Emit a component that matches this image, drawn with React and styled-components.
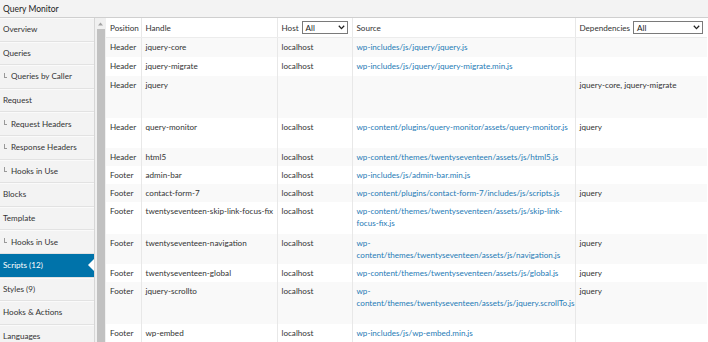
import React from "react"
import styled, { createGlobalStyle } from "styled-components"

const Global = createGlobalStyle`
    html, body {
        margin: 0;
        padding: 0;
        background: #fff;
        overflow: hidden;
    }
    body {
        font-family: Lato, "Open Sans", sans-serif;
        font-size: 8.1px;
        color: #333;
    }
`

const Page = styled.div`
    width: 708px;
    height: 342px;
    display: flex;
    flex-direction: column;
    overflow: hidden;
`

const TitleBar = styled.div`
    height: 17px;
    flex: none;
    display: flex;
    align-items: center;
    padding-left: 3px;
    background: #f3f3f3;
    border-bottom: 1px solid #cfcfcf;
    font-size: 8.5px;
    color: #222;
`

const Body = styled.div`
    flex: 1;
    display: flex;
    min-height: 0;
`

const Nav = styled.ul`
    width: 94px;
    flex: none;
    margin: 0;
    padding: 0;
    list-style: none;
    background: #f3f3f3;
    border-right: 1px solid #d6d6d6;
`

const NavItem = styled.li`
    position: relative;
    height: 22.6px;
    display: flex;
    align-items: center;
    padding-left: ${({ sub }) => (sub ? "4px" : "3px")};
    border-bottom: 1px solid #e2e2e2;
    background: ${({ active }) => (active ? "#0073aa" : "transparent")};
    color: ${({ active }) => (active ? "#fff" : "#333")};
    box-shadow: ${({ active }) => (active ? "none" : "inset 0 1px 0 #fafafa")};

    ${({ active }) =>
        active &&
        `&::after {
            content: "";
            position: absolute;
            right: 0;
            top: 50%;
            margin-top: -6px;
            border-style: solid;
            border-width: 6px 6px 6px 0;
            border-color: transparent #fff transparent transparent;
        }`}
`

const Elbow = styled.span`
    width: 2px;
    height: 4px;
    border-left: 1px solid #999;
    border-bottom: 1px solid #999;
    margin-right: 4px;
    position: relative;
    top: -1px;
`

const Scrollbar = styled.div`
    width: 11px;
    flex: none;
    background: #f0f0f0;
    display: flex;
    flex-direction: column;
    align-items: center;
`

const ScrollArrow = styled.div`
    height: 11px;
    display: flex;
    align-items: center;
    justify-content: center;
`

const Thumb = styled.div`
    width: 8px;
    flex: 1;
    background: #c1c1c1;
`

const TableWrap = styled.div`
    flex: 1;
    overflow: hidden;
`

const Table = styled.table`
    width: 601px;
    table-layout: fixed;
    border-collapse: collapse;
`

const HeadCell = styled.th`
    height: 19px;
    padding: 0 4px;
    text-align: left;
    font-weight: normal;
    color: #333;
    white-space: nowrap;
    border-left: ${({ first }) => (first ? "none" : "1px solid #e8e8e8")};
    border-bottom: 1px solid #ececec;
`

const HeadInner = styled.div`
    display: flex;
    align-items: center;
    gap: 3px;
`

const Select = styled.div`
    flex: ${({ grow }) => (grow ? 1 : "none")};
    width: ${({ w }) => w}px;
    height: 13px;
    box-sizing: border-box;
    border: 1px solid #7a7a7a;
    background: #fff;
    display: flex;
    align-items: center;
    justify-content: space-between;
    padding: 0 2px 0 3px;
    color: #222;
`

const Row = styled.tr`
    height: ${({ h }) => h}px;
    background: ${({ odd }) => (odd ? "#f9f9f9" : "#fff")};
`

const Cell = styled.td`
    vertical-align: top;
    padding: 3px 4px 0;
    line-height: 12px;
    border-left: ${({ first }) => (first ? "none" : "1px solid #e8e8e8")};
    white-space: nowrap;
`

const Link = styled.a`
    color: #1f7bb6;
    text-decoration: none;
    display: block;
`

const navItems = [
    { label: "Overview" },
    { label: "Queries" },
    { label: "Queries by Caller", sub: true },
    { label: "Request" },
    { label: "Request Headers", sub: true },
    { label: "Response Headers", sub: true },
    { label: "Hooks in Use", sub: true },
    { label: "Blocks" },
    { label: "Template" },
    { label: "Hooks in Use", sub: true },
    { label: "Scripts (12)", active: true },
    { label: "Styles (9)" },
    { label: "Hooks & Actions" },
    { label: "Languages" },
]

const scripts = [
    { pos: "Header", handle: "jquery-core", host: "localhost", src: ["wp-includes/js/jquery/jquery.js"], deps: "", h: 19 },
    { pos: "Header", handle: "jquery-migrate", host: "localhost", src: ["wp-includes/js/jquery/jquery-migrate.min.js"], deps: "", h: 19 },
    { pos: "Header", handle: "jquery", host: "", src: [], deps: "jquery-core, jquery-migrate", h: 42 },
    { pos: "Header", handle: "query-monitor", host: "localhost", src: ["wp-content/plugins/query-monitor/assets/query-monitor.js"], deps: "jquery", h: 30 },
    { pos: "Header", handle: "html5", host: "localhost", src: ["wp-content/themes/twentyseventeen/assets/js/html5.js"], deps: "", h: 18 },
    { pos: "Footer", handle: "admin-bar", host: "localhost", src: ["wp-includes/js/admin-bar.min.js"], deps: "", h: 18 },
    { pos: "Footer", handle: "contact-form-7", host: "localhost", src: ["wp-content/plugins/contact-form-7/includes/js/scripts.js"], deps: "jquery", h: 18 },
    { pos: "Footer", handle: "twentyseventeen-skip-link-focus-fix", host: "localhost", src: ["wp-content/themes/twentyseventeen/assets/js/skip-link-", "focus-fix.js"], deps: "", h: 32 },
    { pos: "Footer", handle: "twentyseventeen-navigation", host: "localhost", src: ["wp-", "content/themes/twentyseventeen/assets/js/navigation.js"], deps: "jquery", h: 30 },
    { pos: "Footer", handle: "twentyseventeen-global", host: "localhost", src: ["wp-content/themes/twentyseventeen/assets/js/global.js"], deps: "jquery", h: 18 },
    { pos: "Footer", handle: "jquery-scrollto", host: "localhost", src: ["wp-", "content/themes/twentyseventeen/assets/js/jquery.scrollTo.js"], deps: "jquery", h: 42 },
    { pos: "Footer", handle: "wp-embed", host: "localhost", src: ["wp-includes/js/wp-embed.min.js"], deps: "", h: 19 },
]

const Chevron = () => (
    <svg width="7" height="5" viewBox="0 0 7 5">
        <path d="M0.8 0.8 L3.5 3.6 L6.2 0.8" fill="none" stroke="#222" strokeWidth="1.3" />
    </svg>
)

const UpArrow = () => (
    <svg width="5" height="4" viewBox="0 0 5 4">
        <path d="M0 3.5 L2.5 0.5 L5 3.5 Z" fill="#a3a3a3" />
    </svg>
)

export default function App() {
    return (
        <Page>
            <Global />
            <TitleBar>Query Monitor</TitleBar>
            <Body>
                <Nav>
                    {navItems.map((item, i) => (
                        <NavItem key={i} sub={item.sub} active={item.active}>
                            {item.sub && <Elbow />}
                            {item.label}
                        </NavItem>
                    ))}
                </Nav>
                <Scrollbar>
                    <ScrollArrow>
                        <UpArrow />
                    </ScrollArrow>
                    <Thumb />
                </Scrollbar>
                <TableWrap>
                    <Table>
                        <colgroup>
                            <col style={{ width: 35 }} />
                            <col style={{ width: 136 }} />
                            <col style={{ width: 75 }} />
                            <col style={{ width: 223 }} />
                            <col style={{ width: 132 }} />
                        </colgroup>
                        <thead>
                            <tr>
                                <HeadCell first>Position</HeadCell>
                                <HeadCell>Handle</HeadCell>
                                <HeadCell>
                                    <HeadInner>
                                        Host
                                        <Select w={46}>
                                            All <Chevron />
                                        </Select>
                                    </HeadInner>
                                </HeadCell>
                                <HeadCell>Source</HeadCell>
                                <HeadCell>
                                    <HeadInner>
                                        Dependencies
                                        <Select grow>
                                            All <Chevron />
                                        </Select>
                                    </HeadInner>
                                </HeadCell>
                            </tr>
                        </thead>
                        <tbody>
                            {scripts.map((s, i) => (
                                <Row key={i} h={s.h} odd={i % 2 === 0}>
                                    <Cell first>{s.pos}</Cell>
                                    <Cell>{s.handle}</Cell>
                                    <Cell>{s.host}</Cell>
                                    <Cell>
                                        {s.src.map((line, j) => (
                                            <Link key={j} href="#">{line}</Link>
                                        ))}
                                    </Cell>
                                    <Cell>{s.deps}</Cell>
                                </Row>
                            ))}
                        </tbody>
                    </Table>
                </TableWrap>
            </Body>
        </Page>
    )
}
